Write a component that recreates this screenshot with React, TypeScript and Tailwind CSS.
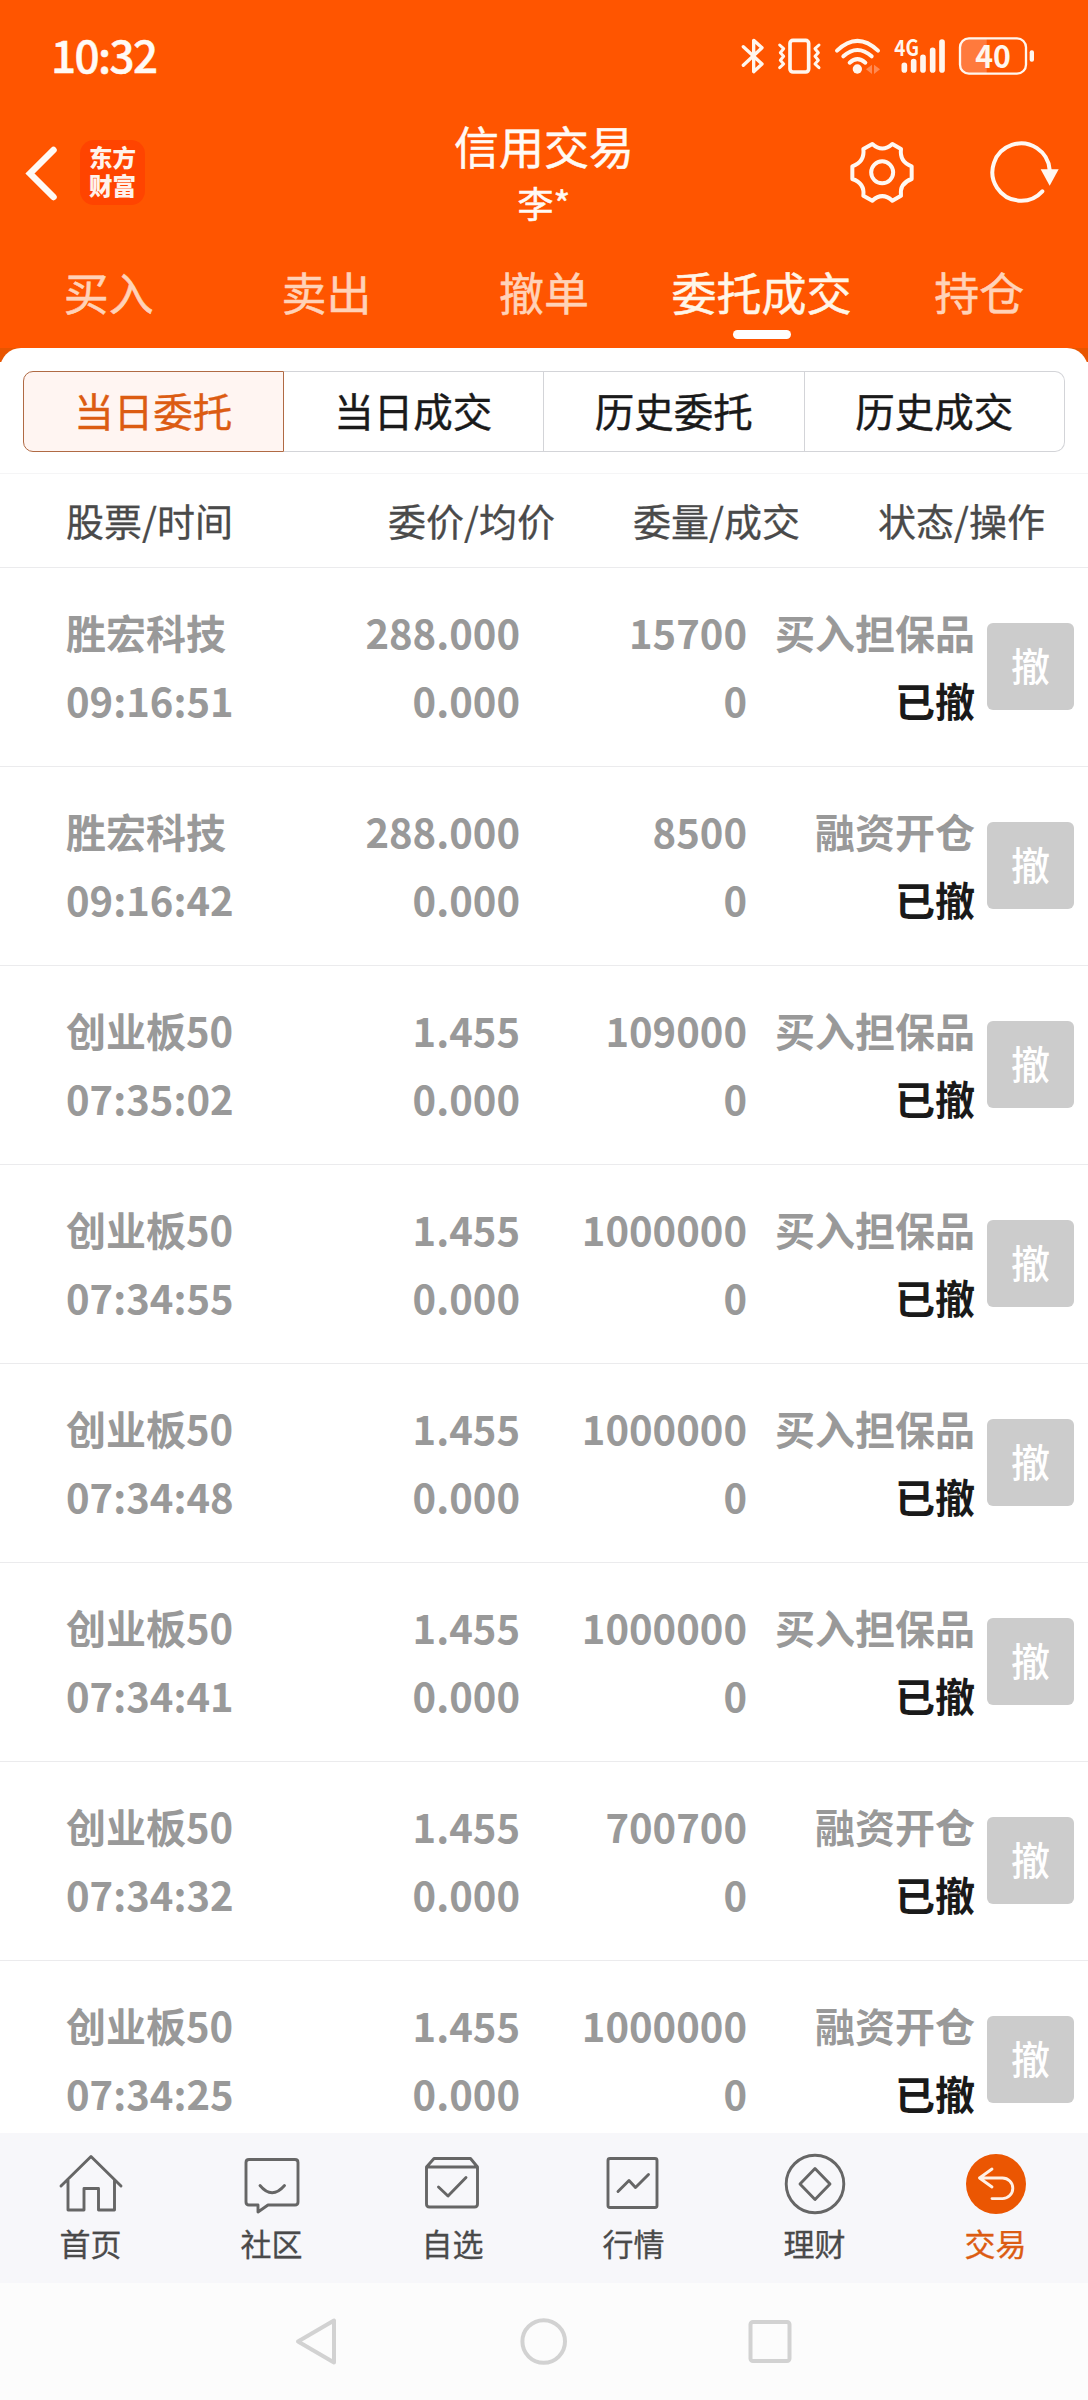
import React from "react";

type Order = {
  name: string;
  time: string;
  price: string;
  volume: string;
  status: string;
};

const orders: Order[] = [
  { name: "胜宏科技", time: "09:16:51", price: "288.000", volume: "15700", status: "买入担保品" },
  { name: "胜宏科技", time: "09:16:42", price: "288.000", volume: "8500", status: "融资开仓" },
  { name: "创业板50", time: "07:35:02", price: "1.455", volume: "109000", status: "买入担保品" },
  { name: "创业板50", time: "07:34:55", price: "1.455", volume: "1000000", status: "买入担保品" },
  { name: "创业板50", time: "07:34:48", price: "1.455", volume: "1000000", status: "买入担保品" },
  { name: "创业板50", time: "07:34:41", price: "1.455", volume: "1000000", status: "买入担保品" },
  { name: "创业板50", time: "07:34:32", price: "1.455", volume: "700700", status: "融资开仓" },
  { name: "创业板50", time: "07:34:25", price: "1.455", volume: "1000000", status: "融资开仓" },
];

function StatusBar() {
  return (
    <div className="flex h-[113px] items-start justify-between pl-[51px] pr-[48px]">
      <span className="mt-[22px] text-[44px] leading-[64px] font-medium tracking-[-1.6px] text-[#fffaf5] [-webkit-text-stroke:0.5px]">10:32</span>
      <div className="mt-[20px] flex">
        <svg className="h-[70px] w-[30px]" viewBox="60 0 90 210" fill="none" stroke="#fff6ee" strokeWidth="10" strokeLinecap="round" strokeLinejoin="round">
          <path d="M70 80 L126 132 L101 155 V61 L126 83 L70 136" />
        </svg>
        <svg className="h-[70px] w-[57px]" viewBox="150 0 171 210" fill="none" stroke="#fff6ee" strokeWidth="11" strokeLinecap="round" strokeLinejoin="round">
          <rect x="210" y="61" width="56" height="95" rx="9" />
          <path strokeWidth="9" d="M179 75 L191 86 L181 98 L191 109 L181 121 L191 132 L179 143 M297 75 L285 86 L295 98 L285 109 L295 121 L285 132 L297 143" />
        </svg>
        <svg className="h-[70px] w-[60px]" viewBox="321 0 180 210" fill="none" stroke="#fff6ee" strokeWidth="12" strokeLinecap="round">
          <path d="M351 92 Q412 33 474 92 M370 109 Q412 71 455 109 M389 128 Q412 107 436 128" />
          <circle cx="412" cy="147" r="14" fill="#fff6ee" stroke="none" />
          <path d="M438 148 L456 134 V162 Z M462 134 L480 148 L462 162 Z" fill="#ff8a52" stroke="none" />
        </svg>
        <svg className="h-[70px] w-[66px]" viewBox="501 0 198 210" fill="none" stroke="#fff6ee" strokeWidth="17" strokeLinecap="round">
          <path d="M553 136 V150 M581 125 V150 M609 112 V150 M638 91 V150 M666 66 V150" />
          <text x="523" y="107" fontSize="66" fontWeight="700" textLength="74" lengthAdjust="spacingAndGlyphs" fill="#fff6ee" stroke="none">4G</text>
        </svg>
        <svg className="h-[70px] w-[87px]" viewBox="699 0 261 210" fill="none">
          <path d="M800 53 H746 Q718 53 718 81 V135 Q718 163 746 163 H800 Z" fill="#ff7a3d" />
          <rect x="720" y="55" width="198" height="106" rx="27" stroke="#fff6ee" strokeWidth="7" />
          <rect x="929" y="91" width="13" height="34" rx="6" fill="#fff6ee" />
          <text x="819" y="143" textAnchor="middle" fontSize="94" fontWeight="700" textLength="107" lengthAdjust="spacingAndGlyphs" fill="#fff6ee">40</text>
        </svg>
      </div>
    </div>
  );
}

function TitleBar() {
  return (
    <div className="grid h-[127px] grid-cols-[1fr_auto_1fr] items-start">
      <div className="flex items-center pt-[27px] pl-[24px]">
        <svg className="h-[64px] w-[36px]" viewBox="0 0 36 64" fill="none" stroke="#fffaf5" strokeWidth="6.5" strokeLinecap="round" strokeLinejoin="miter">
          <path d="M29.5 9 L6 32.500 L29.5 56" />
        </svg>
        <p className="ml-[20px] h-[65px] w-[65px] rounded-[14px] bg-[#ff4400] pt-[3px] text-center text-[23.5px] leading-[28px] font-black text-[#fff3ec]">
          东方
          <br />
          财富
        </p>
      </div>
      <div className="flex flex-col items-center text-[#fffaf5] [-webkit-text-stroke:0.5px]">
        <h1 className="mt-[1px] text-[45px] leading-[64px]">信用交易</h1>
        <p className="-mt-[2px] text-[36px] leading-[52px]">李*</p>
      </div>
      <div className="flex justify-end pt-[17px] pr-[8px]">
        <svg className="h-[90px] w-[240px]" viewBox="0 0 720 270" fill="none" stroke="#fff8f2" strokeWidth="12" strokeLinejoin="round" strokeLinecap="round">
          <path d="M97 42 Q127 69 157 42 L183 57 Q178 95 215 109 V147 Q178 160 183 197 L157 212 Q127 185 97 212 L70 197 Q75 160 37 147 V109 Q75 95 70 57 Z" />
          <circle cx="126.500" cy="127" r="33" />
          <path d="M629 120 A86 86 0 1 0 607 184" />
          <path d="M602 118 H656 L629 167 Z" fill="#fff8f2" stroke="none" />
        </svg>
      </div>
    </div>
  );
}

const mainTabs = ["买入", "卖出", "撤单", "委托成交", "持仓"];

function MainTabs() {
  return (
    <nav className="grid h-[108px] grid-cols-5">
      {mainTabs.map((t) => {
        const active = t === "委托成交";
        return (
          <div key={t} className="flex flex-col items-center">
            <span className={`mt-[20px] text-[45px] leading-[64px] whitespace-nowrap [-webkit-text-stroke:0.5px] ${active ? "text-[#fff6e8]" : "text-[#ffd2b8]"}`}>{t}</span>
            {active && <span className="mt-[6px] h-[9px] w-[58px] rounded-full bg-white" />}
          </div>
        );
      })}
    </nav>
  );
}

function Segments() {
  return (
    <div className="flex h-[126px] items-start border-b border-[#f5f5f6] px-[23px] pt-[23px]">
      <div className="grid h-[81px] w-full grid-cols-4 text-[39.5px] leading-[76px] text-[#1a1a1a] [-webkit-text-stroke:0.4px]">
        <div className="rounded-l-[10px] border border-[#b06a44] bg-[#fff5f2] text-center text-[#dc5c12]">当日委托</div>
        <div className="border-y border-r border-[#d3d4d8] text-center">当日成交</div>
        <div className="border-y border-r border-[#d3d4d8] text-center">历史委托</div>
        <div className="rounded-r-[10px] border-y border-r border-[#d3d4d8] text-center">历史成交</div>
      </div>
    </div>
  );
}

function TableHead() {
  return (
    <div className="grid h-[94px] grid-cols-[320px_169px_245px_245px] border-b border-[#ebebed] pl-[66px] text-[38px] leading-[91px] text-[#4a4a4a] [-webkit-text-stroke:0.3px]">
      <span>股票/时间</span>
      <span className="text-right">委价/均价</span>
      <span className="text-right">委量/成交</span>
      <span className="text-right">状态/操作</span>
    </div>
  );
}

function OrderRow({ o }: { o: Order }) {
  return (
    <div className="grid h-[199px] shrink-0 grid-cols-[210px_244px_227px_228px_100px] border-b border-[#ebebed] pt-[30px] pl-[66px] text-[40px] leading-[68px] font-bold whitespace-nowrap text-[#999999]">
      <div>
        <p>{o.name}</p>
        <p>{o.time}</p>
      </div>
      <div className="text-right">
        <p>{o.price}</p>
        <p>0.000</p>
      </div>
      <div className="text-right">
        <p>{o.volume}</p>
        <p>0</p>
      </div>
      <div className="text-right">
        <p>{o.status}</p>
        <p className="text-[#1a1a1a]">已撤</p>
      </div>
      <button className="mt-[25px] ml-[12px] h-[87px] w-[87px] rounded-[6px] bg-[#cccccc] pb-[4px] text-center text-[39px] leading-[83px] font-medium text-white">
        撤
      </button>
    </div>
  );
}

const navItems: { label: string; icon: React.ReactNode }[] = [
  { label: "首页", icon: <path d="M5 37 L35 7.500 L65 37 M12 31 V61 H28 V39.500 H42.500 V61 H58.500 V31" /> },
  {
    label: "社区",
    icon: (
      <>
        <path d="M12 10.500 H58 Q61 10.500 61 13.500 V53 Q61 56 58 56 H31 L21 63 V56 H12 Q9 56 9 53 V13.500 Q9 10.500 12 10.500 Z" />
        <path d="M23 36.500 Q35 51 47.500 36.500" />
      </>
    ),
  },
  {
    label: "自选",
    icon: (
      <>
        <path d="M8.500 18 L16 9.500 H52.500 L59.500 18 V55 Q59.500 58 56.500 58 H11.500 Q8.500 58 8.500 55 Z M8.500 18 H59.500" />
        <path d="M20.500 38 L30 47 L48 28.500" />
      </>
    ),
  },
  {
    label: "行情",
    icon: (
      <>
        <rect x="9" y="9.500" width="49" height="49" rx="2" />
        <path d="M19 42.500 L30 31.500 L36.500 38.500 L49.500 25.500" />
      </>
    ),
  },
  {
    label: "理财",
    icon: (
      <>
        <circle cx="35" cy="35" r="28.800" />
        <path d="M35 19.500 L50 35 L35 50.500 L20 35 Z" />
      </>
    ),
  },
  {
    label: "交易",
    icon: (
      <>
        <circle cx="35" cy="35" r="30" fill="#eb5602" stroke="none" />
        <path stroke="#fff0e6" d="M31 20 L18.500 29 L31 38 M18.500 29 H41.500 A10.300 10.300 0 0 1 41.500 49.600 H31" />
      </>
    ),
  },
];

function BottomNav() {
  return (
    <nav className="grid h-[150px] shrink-0 grid-cols-6 bg-[#f7f7fa] pr-[2px]">
      {navItems.map((n) => (
        <div key={n.label} className="flex flex-col items-center pt-[16px]">
          <svg className="h-[70px] w-[70px]" viewBox="0 0 70 70" fill="none" stroke="#666666" strokeWidth="2.900" strokeLinecap="round" strokeLinejoin="round">
            {n.icon}
          </svg>
          <span className={`mt-[2px] text-[31px] leading-[44px] [-webkit-text-stroke:0.3px] ${n.label === "交易" ? "text-[#dc5c12]" : "text-[#4a4a4a]"}`}>{n.label}</span>
        </div>
      ))}
    </nav>
  );
}

function SystemNav() {
  return (
    <div className="flex h-[117px] shrink-0 items-center justify-center gap-[176px] bg-[#fcfcfc]">
      <svg className="h-[50px] w-[50px]" viewBox="0 0 50 50" fill="none" stroke="#d2d2d2" strokeWidth="4" strokeLinejoin="round">
        <path d="M5 24.500 L41 3.500 V45.500 Z" />
      </svg>
      <svg className="h-[50px] w-[50px]" viewBox="0 0 50 50" fill="none" stroke="#d2d2d2" strokeWidth="4">
        <circle cx="24.700" cy="24.500" r="21.300" />
      </svg>
      <svg className="h-[50px] w-[50px]" viewBox="0 0 50 50" fill="none" stroke="#d2d2d2" strokeWidth="4">
        <rect x="5.500" y="5" width="39" height="39" rx="2.500" />
      </svg>
    </div>
  );
}

export default function App() {
  return (
    <div className="flex h-[2400px] w-[1088px] flex-col overflow-hidden bg-white font-['Noto_Sans_CJK_SC',sans-serif]">
      <header className="h-[348px] shrink-0 bg-[#ff5500]">
        <StatusBar />
        <TitleBar />
        <MainTabs />
      </header>
      <main className="flex min-h-0 grow flex-col overflow-hidden bg-[linear-gradient(#e85500_14px,#ffffff_14px)]">
        <div className="rounded-t-[21px] bg-white">
          <Segments />
          <TableHead />
          {orders.map((o) => (
            <OrderRow key={o.time} o={o} />
          ))}
        </div>
      </main>
      <BottomNav />
      <SystemNav />
    </div>
  );
}
